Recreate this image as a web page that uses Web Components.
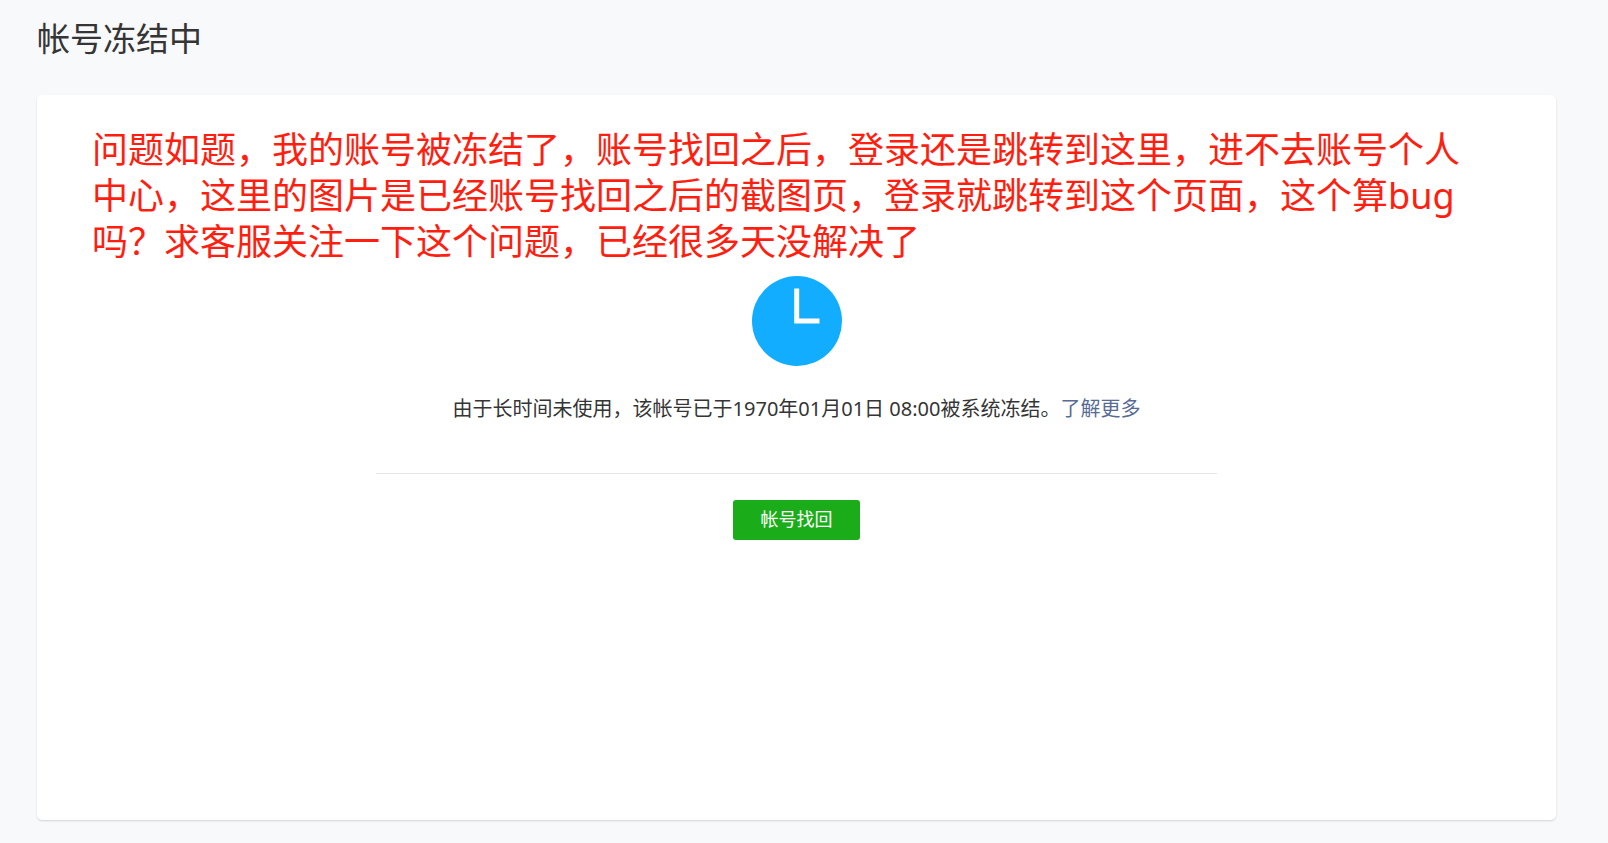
<!DOCTYPE html>
<html lang="zh-CN">
<head>
<meta charset="utf-8">
<meta name="viewport" content="width=device-width, initial-scale=1">
<title>帐号冻结中</title>
<style>
  body {
    margin: 0;
    background: #f8f9fb;
    color: #353535;
    font-family: "Noto Sans", "Noto Sans CJK SC", sans-serif;
  }
</style>
</head>
<body>
<account-page>
  <span slot="title">帐号冻结中</span>
  <status-card>
    <user-note slot="note">问题如题，我的账号被冻结了，账号找回之后，登录还是跳转到这里，进不去账号个人中心，这里的图片是已经账号找回之后的截图页，登录就跳转到这个页面，这个算bug吗？求客服关注一下这个问题，已经很多天没解决了</user-note>
    <clock-icon slot="icon"></clock-icon>
    由于长时间未使用，该帐号已于1970年01月01日 08:00被系统冻结。<text-link href="#more">了解更多</text-link>
    <primary-button slot="action">帐号找回</primary-button>
  </status-card>
</account-page>

<script>
  const define = (name, html, setup) => {
    const template = document.createElement('template');
    template.innerHTML = html;
    customElements.define(name, class extends HTMLElement {
      constructor() {
        super();
        this.attachShadow({ mode: 'open' }).append(template.content.cloneNode(true));
      }
      connectedCallback() {
        if (setup) setup(this, this.shadowRoot);
      }
    });
  };

  define('account-page', `
    <style>
      :host {
        display: flex;
        flex-direction: column;
        box-sizing: border-box;
        min-height: 100vh;
        padding: 15px 52px 23px 37px;
      }
      h1 {
        margin: 0 0 32px;
        font-size: 33px;
        line-height: 48px;
        font-weight: 400;
      }
      main { flex: 1; display: flex; }
    </style>
    <h1><slot name="title"></slot></h1>
    <main><slot></slot></main>
  `);

  define('status-card', `
    <style>
      :host {
        flex: 1;
        display: flex;
        flex-direction: column;
        align-items: center;
        box-sizing: border-box;
        padding: 32px 0;
        background: #fff;
        border-radius: 5px;
        box-shadow: 0 1px 2px rgba(0, 0, 0, 0.15);
      }
      .message {
        margin: 0;
        padding: 25px 0 46px;
        font-size: 20px;
        line-height: 36px;
        text-align: center;
      }
      .actions {
        display: flex;
        justify-content: center;
        box-sizing: border-box;
        width: 100%;
        max-width: 841px;
        padding-top: 26px;
        border-top: 1px solid #e4e5e6;
      }
    </style>
    <slot name="note"></slot>
    <slot name="icon"></slot>
    <p class="message"><slot></slot></p>
    <div class="actions"><slot name="action"></slot></div>
  `);

  define('user-note', `
    <style>
      :host { display: block; align-self: stretch; padding: 0 80px 11px 55px; }
      p { margin: 0; color: #ff1e10; font-size: 36px; line-height: 46px; }
    </style>
    <p><slot></slot></p>
  `);

  define('clock-icon', `
    <style>
      :host, svg { display: block; }
    </style>
    <svg width="90" height="90" viewBox="0 0 90 90" aria-hidden="true">
      <circle cx="45" cy="45" r="45" fill="#12adff"/>
      <path d="M44.7 12.5V45H67.5" fill="none" stroke="#fff" stroke-width="5"/>
    </svg>
  `);

  // Inline element: no whitespace around the anchor, so no gap is added to the sentence.
  define('text-link', `<style>
      :host { display: inline; }
      a { color: #576b95; text-decoration: none; }
      a:hover { text-decoration: underline; }
    </style><a><slot></slot></a>`, (host, root) => {
    root.querySelector('a').href = host.getAttribute('href') || '#';
  });

  define('primary-button', `
    <style>
      :host { display: block; }
      button {
        display: block;
        height: 40px;
        min-width: 127px;
        padding: 0 24px 2px;
        border: 0;
        border-radius: 3px;
        background: #1aad19;
        color: #fff;
        font: inherit;
        font-size: 18px;
        line-height: 38px;
        cursor: pointer;
      }
      button:hover { background: #179b16; }
    </style>
    <button type="button"><slot></slot></button>
  `);
</script>
</body>
</html>
